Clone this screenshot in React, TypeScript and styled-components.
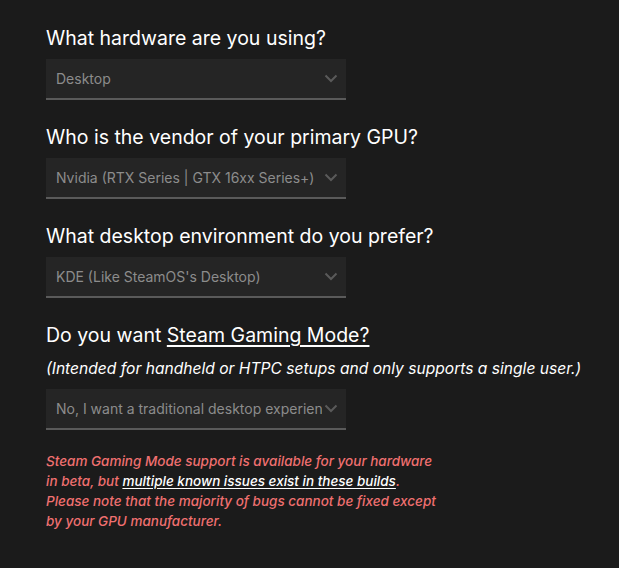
import styled, { createGlobalStyle } from 'styled-components';

const GlobalStyle = createGlobalStyle`
  html, body {
    margin: 0;
    padding: 0;
    background: #1b1b1b;
  }
  body {
    font-family: Inter, 'Liberation Sans', sans-serif;
    color: #ffffff;
  }
`

interface Question {
    title: React.ReactNode;
    note?: string;
    value: string;
}

const questions: Question[] = [
    { title: 'What hardware are you using?', value: 'Desktop' },
    { title: 'Who is the vendor of your primary GPU?', value: 'Nvidia (RTX Series | GTX 16xx Series+)' },
    { title: 'What desktop environment do you prefer?', value: "KDE (Like SteamOS's Desktop)" },
    {
        title: <>Do you want <u>Steam Gaming Mode?</u></>,
        note: '(Intended for handheld or HTPC setups and only supports a single user.)',
        value: 'No, I want a traditional desktop experience',
    },
]

const Chevron = () => (
    <svg width="14" height="9" viewBox="0 0 14 9" fill="none">
        <path d="M1.5 1.5 L7 7 L12.5 1.5" stroke="#5a5a5a" strokeWidth="2" />
    </svg>
)

const App = () => {
    return (
        <>
            <GlobalStyle />
            <Page>
                {questions.map((q, index) =>
                    <Section key={index}>
                        <Heading>{q.title}</Heading>
                        {q.note && <Note>{q.note}</Note>}
                        <Select>
                            <SelectText>{q.value}</SelectText>
                            <Chevron />
                        </Select>
                    </Section>
                )}
                <Warning>
                    Steam Gaming Mode support is available for your hardware<br />
                    in beta, but <a>multiple known issues exist in these builds</a>.<br />
                    Please note that the majority of bugs cannot be fixed except<br />
                    by your GPU manufacturer.
                </Warning>
            </Page>
        </>
    )
}

export default App

const Page = styled.div`
    width: 619px;
    height: 568px;
    box-sizing: border-box;
    padding: 24px 0 0 46px;
    display: flex;
    flex-direction: column;
    gap: 23px;
    overflow: hidden;
`

const Section = styled.div`
    display: flex;
    flex-direction: column;
`

const Heading = styled.h2`
    margin: 0 0 7px;
    font-size: 19.5px;
    font-weight: 400;
    line-height: 28px;
    color: #ffffff;

    u {
        text-underline-offset: 3px;
        text-decoration-thickness: 1.5px;
    }
`

const Note = styled.p`
    margin: 3px 0 10px;
    font-size: 15.6px;
    font-style: italic;
    line-height: 20px;
    color: #ffffff;
    white-space: nowrap;
`

const Select = styled.div`
    width: 300px;
    height: 41px;
    box-sizing: border-box;
    background: #252525;
    border-bottom: 2px solid #5a5a5a;
    display: flex;
    align-items: center;
    gap: 2px;
    padding: 0 8px 0 10px;
`

const SelectText = styled.span`
    flex: 1;
    min-width: 0;
    overflow: hidden;
    white-space: nowrap;
    font-size: 14px;
    color: #8c8c8c;
`

const Warning = styled.p`
    margin: -2px 0 0;
    font-size: 13.5px;
    font-style: italic;
    font-weight: 500;
    line-height: 20px;
    color: #f07070;

    a {
        color: #ffffff;
        text-decoration: underline;
        text-underline-offset: 2px;
    }
`
